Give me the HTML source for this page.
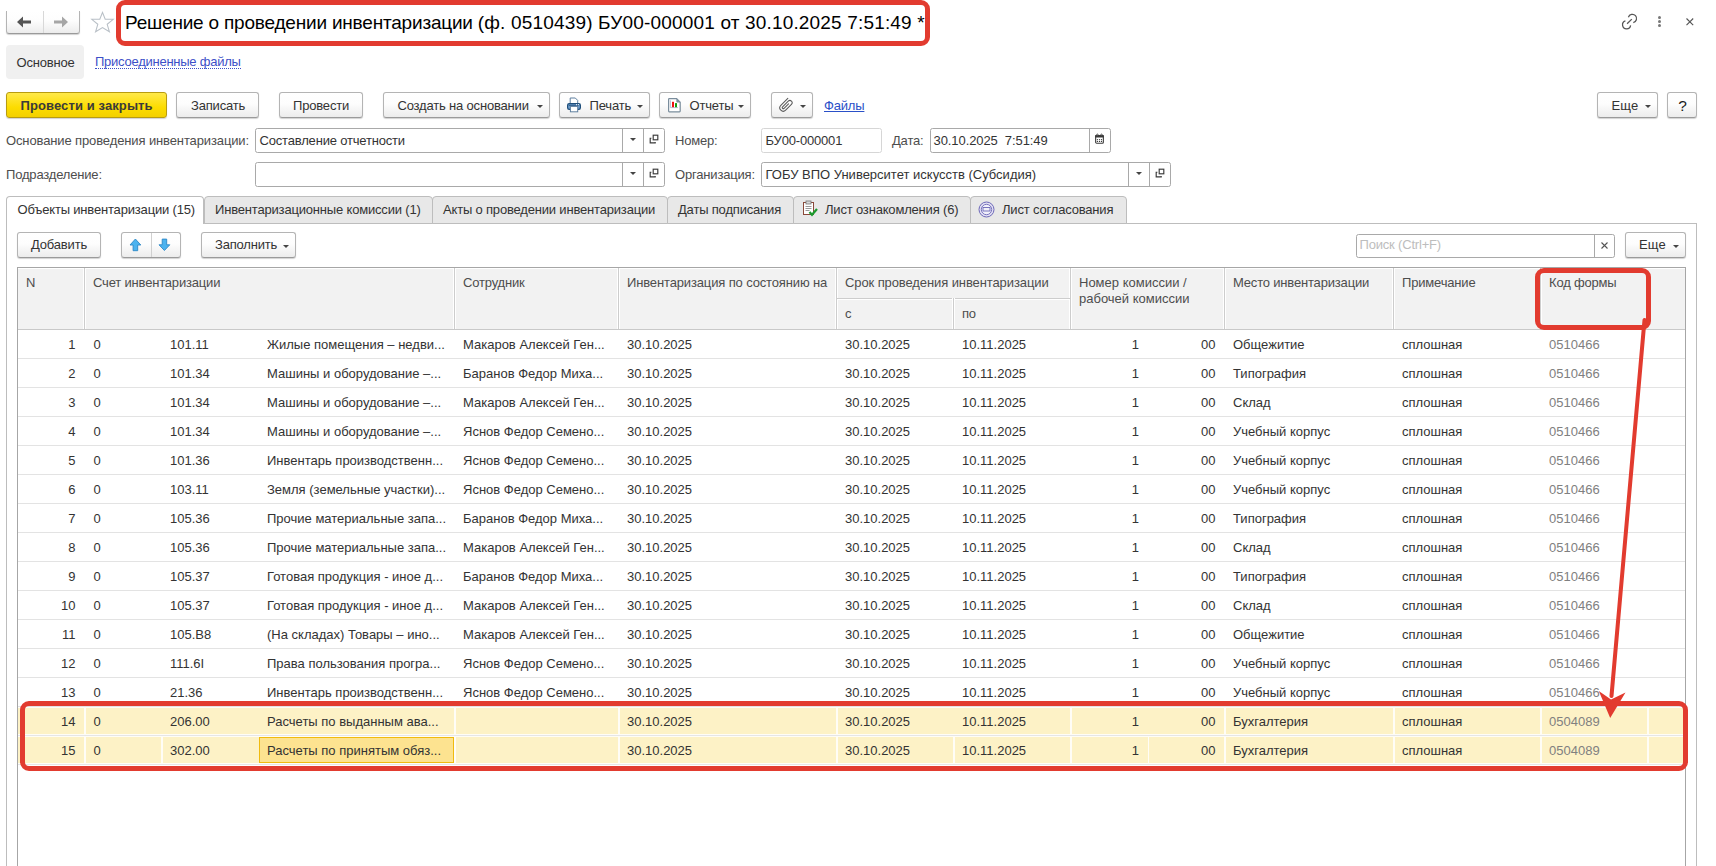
<!DOCTYPE html><html><head><meta charset="utf-8"><style>
html,body{margin:0;padding:0;width:1716px;height:866px;overflow:hidden;background:#fff;position:relative;font-family:"Liberation Sans",sans-serif;}
.t{position:absolute;white-space:nowrap;line-height:16px;height:16px;}
.btn{position:absolute;box-sizing:border-box;border:1px solid #b4b4b4;border-bottom-color:#9a9a9a;border-radius:3px;background:linear-gradient(#ffffff 0%,#fdfdfd 45%,#ececec 100%);box-shadow:0 1px 1px rgba(0,0,0,0.18);}
.inp{position:absolute;box-sizing:border-box;border:1px solid #a9a9a9;border-radius:2.5px;background:#fff;}
.vl{position:absolute;width:1px;}
.hl{position:absolute;height:1px;}
</style></head><body>
<div class="btn" style="left:6px;top:11px;width:74px;height:23px;border-top:none;border-radius:0 0 3px 3px;"></div>
<div style="position:absolute;left:43px;top:11px;width:1px;height:22px;background:#d8d8d8;"></div>
<svg style="position:absolute;left:17px;top:16px" width="16" height="12" viewBox="0 0 16 12"><path d="M0 6 L6 0.5 L6 4.5 L14 4.5 L14 7.5 L6 7.5 L6 11.5 Z" fill="#555"/></svg>
<svg style="position:absolute;left:53px;top:16px" width="16" height="12" viewBox="0 0 16 12"><path d="M15 6 L9 0.5 L9 4.5 L1 4.5 L1 7.5 L9 7.5 L9 11.5 Z" fill="#a6a6a6"/></svg>
<svg style="position:absolute;left:90px;top:10px" width="25" height="24" viewBox="0 0 25 24"><path d="M12.5 2.4 L15.2 9.1 L23.2 9.3 L17.2 14.3 L19.4 21.8 L12.5 17.6 L5.6 21.8 L7.8 14.3 L1.8 9.3 L9.8 9.1 Z" fill="none" stroke="#b9c0c7" stroke-width="1.1"/></svg>
<div class="t" style="left:125px;top:14.62px;font-size:19px;color:#000;font-weight:normal;letter-spacing:-0.2px;">Решение о проведении инвентаризации</div>
<div class="t" style="left:477.8px;top:14.62px;font-size:19px;color:#000;font-weight:normal;letter-spacing:0.17px;">(ф. 0510439) БУ00-000001 от 30.10.2025 7:51:49 *</div>
<div style="position:absolute;left:116px;top:0px;width:814px;height:46px;box-sizing:border-box;border:5px solid #e23b2f;border-radius:9px;"></div>
<svg style="position:absolute;left:1615px;top:8px" width="28" height="26" viewBox="0 0 28 26"><g fill="none" stroke="#555" stroke-width="1.25" stroke-linecap="butt"><path d="M13.4 9.2 A4.2 4.2 0 1 1 18.3 14.6"/><path d="M10.4 12.9 A4.05 4.05 0 1 0 15.6 17.3"/><path d="M12.1 15.8 L16.8 11.1"/></g></svg>
<div style="position:absolute;left:1657.5px;top:15.5px;width:3.2px;height:3.2px;background:#777;border-radius:50%;"></div>
<div style="position:absolute;left:1657.5px;top:19.5px;width:3.2px;height:3.2px;background:#777;border-radius:50%;"></div>
<div style="position:absolute;left:1657.5px;top:23.5px;width:3.2px;height:3.2px;background:#777;border-radius:50%;"></div>
<svg style="position:absolute;left:1685.5px;top:17.5px" width="8" height="8" viewBox="0 0 8 8"><path d="M0.5 0.5 L7.2 7.2 M7.2 0.5 L0.5 7.2" stroke="#555" stroke-width="1.1"/></svg>
<div style="position:absolute;left:6px;top:45px;width:78px;height:34px;background:#f0f0f0;border-radius:4px;"></div>
<div class="t" style="left:16.5px;top:54.5px;font-size:13px;color:#333;font-weight:normal;letter-spacing:-0.18px;">Основное</div>
<div class="t" style="left:95px;top:54.0px;font-size:13px;color:#3d4fc8;font-weight:normal;letter-spacing:-0.25px;border-bottom:1px dotted #3d4fc8;height:13.5px;">Присоединенные файлы</div>
<div class="btn" style="left:6px;top:92px;width:161px;height:26px;border-color:#b89c10;background:linear-gradient(#ffe94a,#fcdc00 60%,#f3d000);"></div>
<div class="t" style="left:20.5px;top:97.5px;font-size:13px;color:#3a3a3a;font-weight:bold;letter-spacing:0.1px;">Провести и закрыть</div>
<div class="btn" style="left:176px;top:92px;width:83px;height:26px;"></div>
<div class="t" style="left:191px;top:97.5px;font-size:13px;color:#333;font-weight:normal;letter-spacing:-0.18px;">Записать</div>
<div class="btn" style="left:279px;top:92px;width:84px;height:26px;"></div>
<div class="t" style="left:293px;top:97.5px;font-size:13px;color:#333;font-weight:normal;letter-spacing:-0.18px;">Провести</div>
<div class="btn" style="left:383px;top:92px;width:167px;height:26px;"></div>
<div class="t" style="left:397.5px;top:97.5px;font-size:13px;color:#333;font-weight:normal;letter-spacing:-0.18px;">Создать на основании</div>
<div style="position:absolute;left:537px;top:104.9px;width:0;height:0;border-left:3px solid transparent;border-right:3px solid transparent;border-top:3.2px solid #444;"></div>
<div class="btn" style="left:559px;top:92px;width:91px;height:26px;"></div>
<div class="t" style="left:589.5px;top:97.5px;font-size:13px;color:#333;font-weight:normal;letter-spacing:-0.18px;">Печать</div>
<div style="position:absolute;left:637px;top:104.9px;width:0;height:0;border-left:3px solid transparent;border-right:3px solid transparent;border-top:3.2px solid #444;"></div>
<svg style="position:absolute;left:566px;top:97px" width="16" height="16" viewBox="0 0 16 16">
<path d="M4.2 1 L9.3 1 L11.7 3.4 L11.7 6.8 L4.2 6.8 Z" fill="#fff" stroke="#5f7f9f" stroke-width="1"/>
<rect x="1.6" y="6.6" width="12.8" height="5.8" rx="1.6" fill="#6e9dcc" stroke="#1f4e7a" stroke-width="1.2"/>
<path d="M2.8 8.3 L13.2 8.3" stroke="#1f4e7a" stroke-width="0.9"/>
<rect x="10" y="7.2" width="1" height="1" fill="#fff"/><rect x="12" y="7.2" width="1" height="1" fill="#fff"/>
<rect x="4.4" y="9.4" width="7.3" height="5.4" fill="#fff" stroke="#5f7f9f" stroke-width="1"/></svg>
<div class="btn" style="left:659px;top:92px;width:92px;height:26px;"></div>
<div class="t" style="left:689.5px;top:97.5px;font-size:13px;color:#333;font-weight:normal;letter-spacing:-0.18px;">Отчеты</div>
<div style="position:absolute;left:738px;top:104.9px;width:0;height:0;border-left:3px solid transparent;border-right:3px solid transparent;border-top:3.2px solid #444;"></div>
<svg style="position:absolute;left:667px;top:97px" width="15" height="16" viewBox="0 0 15 16">
<path d="M2.2 1.7 H9.6 L13.2 5.3 V14.1 Q13.2 14.8 12.5 14.8 H2.2 Q1.6 14.8 1.6 14.1 V2.4 Q1.6 1.7 2.2 1.7 Z" fill="#fff" stroke="#7a8d9c" stroke-width="1.2"/>
<path d="M9.4 1.7 L13.2 5.5 L10.2 5.5 Q9.4 5.5 9.4 4.7 Z" fill="#7a8d9c"/>
<path d="M3.4 3.3 V10.6 H11" fill="none" stroke="#9aa8c0" stroke-width="0.7"/>
<rect x="5" y="4.8" width="2" height="5.4" fill="#ee1111"/><rect x="8" y="6.1" width="2" height="4.1" fill="#12a012"/></svg>
<div class="btn" style="left:771px;top:92px;width:42px;height:26px;"></div>
<div style="position:absolute;left:800px;top:104.9px;width:0;height:0;border-left:3px solid transparent;border-right:3px solid transparent;border-top:3.2px solid #444;"></div>
<svg style="position:absolute;left:778px;top:96px" width="18" height="18" viewBox="0 0 18 18"><g transform="matrix(0.7071 -0.7071 0.7071 0.7071 0 0)"><path d="M5.3 8.6 L-4.6 8.6 A3.4 3.4 0 0 0 -4.6 15.4 L3.6 15.4 A2.25 2.25 0 0 0 3.6 10.9 L-4.4 10.9 A1.05 1.05 0 0 0 -4.4 13.0 L1.9 13.0" fill="none" stroke="#5a5a5a" stroke-width="1.05" stroke-linecap="round"/></g></svg>
<div class="t" style="left:824px;top:97.5px;font-size:13px;color:#2a50c8;font-weight:normal;letter-spacing:-0.18px;text-decoration:underline;">Файлы</div>
<div class="btn" style="left:1597px;top:92px;width:61px;height:26px;"></div>
<div class="t" style="left:1611.5px;top:97.5px;font-size:13px;color:#333;font-weight:normal;letter-spacing:0.2px;">Еще</div>
<div style="position:absolute;left:1645px;top:104.9px;width:0;height:0;border-left:3px solid transparent;border-right:3px solid transparent;border-top:3.2px solid #444;"></div>
<div class="btn" style="left:1667px;top:92px;width:30px;height:26px;"></div>
<div class="t" style="left:1678.2px;top:97.83px;font-size:15.5px;color:#1a1a1a;font-weight:normal;">?</div>
<div class="t" style="left:6px;top:132.5px;font-size:13px;color:#4d4d4d;font-weight:normal;letter-spacing:-0.12px;">Основание проведения инвентаризации:</div>
<div class="inp" style="left:255px;top:128px;width:410px;height:25px;"></div>
<div style="position:absolute;left:622px;top:129px;width:1px;height:23px;background:#a9a9a9;"></div>
<div style="position:absolute;left:643px;top:129px;width:1px;height:23px;background:#a9a9a9;"></div>
<div style="position:absolute;left:630.0px;top:138.4px;width:0;height:0;border-left:3px solid transparent;border-right:3px solid transparent;border-top:3.2px solid #444;"></div>
<svg style="position:absolute;left:648.8px;top:133.8px" width="11" height="11" viewBox="0 0 11 11"><path d="M2.4 4.2 H1.2 V8.8 H6.2 V8" fill="none" stroke="#3a3a3a" stroke-width="1.15"/><rect x="4.2" y="1.2" width="4.6" height="4.6" fill="none" stroke="#3a3a3a" stroke-width="1.15"/></svg>
<div class="t" style="left:259.5px;top:132.5px;font-size:13px;color:#333;font-weight:normal;letter-spacing:-0.18px;">Составление отчетности</div>
<div class="t" style="left:675px;top:132.5px;font-size:13px;color:#4d4d4d;font-weight:normal;letter-spacing:-0.18px;">Номер:</div>
<div class="inp" style="left:761px;top:128px;width:121px;height:25px;border-color:#d6d6d6;"></div>
<div class="t" style="left:765.5px;top:132.5px;font-size:13px;color:#333;font-weight:normal;letter-spacing:-0.18px;">БУ00-000001</div>
<div class="t" style="left:892px;top:132.5px;font-size:13px;color:#4d4d4d;font-weight:normal;letter-spacing:-0.18px;">Дата:</div>
<div class="inp" style="left:930px;top:128px;width:181px;height:25px;"></div>
<div style="position:absolute;left:1089px;top:129px;width:1px;height:23px;background:#a9a9a9;"></div>
<div class="t" style="left:933.5px;top:132.5px;font-size:13px;color:#333;font-weight:normal;letter-spacing:-0.08px;">30.10.2025&nbsp; 7:51:49</div>
<svg style="position:absolute;left:1094px;top:133px" width="12" height="12" viewBox="0 0 12 12"><rect x="1.65" y="2.45" width="7.7" height="7.8" rx="1" fill="#fff" stroke="#3a3a3a" stroke-width="1.1"/><rect x="1.1" y="1.9" width="8.8" height="2.7" rx="0.8" fill="#3a3a3a"/><g fill="#fff" stroke="#3a3a3a" stroke-width="0.8"><circle cx="3.4" cy="1.8" r="0.75"/><circle cx="7.5" cy="1.8" r="0.75"/></g><g fill="#3a3a3a"><circle cx="3.4" cy="6.6" r="0.65"/><circle cx="5.5" cy="6.6" r="0.65"/><circle cx="7.5" cy="6.6" r="0.65"/><circle cx="3.4" cy="8.4" r="0.65"/><circle cx="5.5" cy="8.4" r="0.65"/><circle cx="7.5" cy="8.4" r="0.65"/></g></svg>
<div class="t" style="left:6px;top:166.5px;font-size:13px;color:#4d4d4d;font-weight:normal;letter-spacing:-0.18px;">Подразделение:</div>
<div class="inp" style="left:255px;top:162px;width:410px;height:25px;"></div>
<div style="position:absolute;left:622px;top:163px;width:1px;height:23px;background:#a9a9a9;"></div>
<div style="position:absolute;left:643px;top:163px;width:1px;height:23px;background:#a9a9a9;"></div>
<div style="position:absolute;left:630.0px;top:172.4px;width:0;height:0;border-left:3px solid transparent;border-right:3px solid transparent;border-top:3.2px solid #444;"></div>
<svg style="position:absolute;left:648.8px;top:167.8px" width="11" height="11" viewBox="0 0 11 11"><path d="M2.4 4.2 H1.2 V8.8 H6.2 V8" fill="none" stroke="#3a3a3a" stroke-width="1.15"/><rect x="4.2" y="1.2" width="4.6" height="4.6" fill="none" stroke="#3a3a3a" stroke-width="1.15"/></svg>
<div class="t" style="left:675px;top:166.5px;font-size:13px;color:#4d4d4d;font-weight:normal;letter-spacing:-0.18px;">Организация:</div>
<div class="inp" style="left:761px;top:162px;width:410px;height:25px;"></div>
<div style="position:absolute;left:1128px;top:163px;width:1px;height:23px;background:#a9a9a9;"></div>
<div style="position:absolute;left:1149px;top:163px;width:1px;height:23px;background:#a9a9a9;"></div>
<div style="position:absolute;left:1136.0px;top:172.4px;width:0;height:0;border-left:3px solid transparent;border-right:3px solid transparent;border-top:3.2px solid #444;"></div>
<svg style="position:absolute;left:1154.8px;top:167.8px" width="11" height="11" viewBox="0 0 11 11"><path d="M2.4 4.2 H1.2 V8.8 H6.2 V8" fill="none" stroke="#3a3a3a" stroke-width="1.15"/><rect x="4.2" y="1.2" width="4.6" height="4.6" fill="none" stroke="#3a3a3a" stroke-width="1.15"/></svg>
<div class="t" style="left:765.5px;top:166.5px;font-size:13px;color:#333;font-weight:normal;">ГОБУ ВПО Университет искусств (Субсидия)</div>
<div style="position:absolute;left:6px;top:223px;width:1691px;height:700px;box-sizing:border-box;border:1px solid #bdbdbd;border-bottom:none;"></div>
<div style="position:absolute;left:6.0px;top:196px;width:198.0px;height:28px;box-sizing:border-box;border:1px solid #bdbdbd;border-bottom:none;border-radius:4px 4px 0 0;background:#fff;"></div>
<div class="t" style="left:17.5px;top:201.5px;font-size:13px;color:#333;font-weight:normal;letter-spacing:-0.18px;">Объекты инвентаризации (15)</div>
<div style="position:absolute;left:203.5px;top:196px;width:229px;height:28px;box-sizing:border-box;border:1px solid #bdbdbd;border-radius:4px 4px 0 0;background:#e8e8e8;"></div>
<div class="t" style="left:215px;top:201.5px;font-size:13px;color:#333;font-weight:normal;letter-spacing:-0.18px;">Инвентаризационные комиссии (1)</div>
<div style="position:absolute;left:431.5px;top:196px;width:236px;height:28px;box-sizing:border-box;border:1px solid #bdbdbd;border-radius:4px 4px 0 0;background:#e8e8e8;"></div>
<div class="t" style="left:443px;top:201.5px;font-size:13px;color:#333;font-weight:normal;letter-spacing:-0.18px;">Акты о проведении инвентаризации</div>
<div style="position:absolute;left:666.5px;top:196px;width:127.5px;height:28px;box-sizing:border-box;border:1px solid #bdbdbd;border-radius:4px 4px 0 0;background:#e8e8e8;"></div>
<div class="t" style="left:678px;top:201.5px;font-size:13px;color:#333;font-weight:normal;letter-spacing:-0.18px;">Даты подписания</div>
<div style="position:absolute;left:793.0px;top:196px;width:178.0px;height:28px;box-sizing:border-box;border:1px solid #bdbdbd;border-radius:4px 4px 0 0;background:#e8e8e8;"></div>
<div class="t" style="left:825px;top:201.5px;font-size:13px;color:#333;font-weight:normal;letter-spacing:-0.18px;">Лист ознакомления (6)</div>
<div style="position:absolute;left:970.0px;top:196px;width:156.5px;height:28px;box-sizing:border-box;border:1px solid #bdbdbd;border-radius:4px 4px 0 0;background:#e8e8e8;"></div>
<div class="t" style="left:1002px;top:201.5px;font-size:13px;color:#333;font-weight:normal;letter-spacing:-0.18px;">Лист согласования</div>
<svg style="position:absolute;left:802px;top:200px" width="16" height="17" viewBox="0 0 16 17"><rect x="1.5" y="2.5" width="10" height="12" fill="#fff" stroke="#8a4a3a"/><rect x="4" y="1" width="5" height="3" fill="#d8d8d8" stroke="#777" stroke-width="0.8"/><g stroke="#999" stroke-width="1"><path d="M3.5 6.5h6M3.5 8.5h6M3.5 10.5h4"/></g><path d="M7.5 12 L10 14.8 L15 9" fill="none" stroke="#1c9a2e" stroke-width="2.2"/></svg>
<svg style="position:absolute;left:978px;top:201px" width="17" height="17" viewBox="0 0 17 17"><circle cx="8.5" cy="8.5" r="7.5" fill="#e2e0f3" stroke="#6d68b8" stroke-width="1"/><circle cx="8.5" cy="8.5" r="5.2" fill="#f1f0fa" stroke="#6d68b8" stroke-width="0.9"/><rect x="5" y="6.5" width="7" height="3.5" fill="none" stroke="#6d68b8" stroke-width="0.9"/></svg>
<div class="btn" style="left:17px;top:232px;width:84px;height:26px;"></div>
<div class="t" style="left:31px;top:237.2px;font-size:13px;color:#333;font-weight:normal;letter-spacing:-0.18px;">Добавить</div>
<div class="btn" style="left:121px;top:232px;width:60px;height:26px;"></div>
<div style="position:absolute;left:151px;top:233px;width:1px;height:24px;background:#d0d0d0;"></div>
<svg style="position:absolute;left:128px;top:237px" width="15" height="15" viewBox="0 0 15 15"><path d="M7.4 2 L12.8 8 L9.7 8 L9.7 13.7 L5.1 13.7 L5.1 8 L2 8 Z" fill="#4cb3ef" stroke="#2d88c6" stroke-width="0.9" stroke-linejoin="miter"/></svg>
<svg style="position:absolute;left:157px;top:237px" width="15" height="15" viewBox="0 0 15 15"><path d="M5.2 2.1 L9.7 2.1 L9.7 7.8 L12.8 7.8 L7.4 13.5 L2 7.8 L5.2 7.8 Z" fill="#4cb3ef" stroke="#2d88c6" stroke-width="0.9"/></svg>
<div class="btn" style="left:201px;top:232px;width:95px;height:26px;"></div>
<div class="t" style="left:215px;top:237.2px;font-size:13px;color:#333;font-weight:normal;letter-spacing:-0.18px;">Заполнить</div>
<div style="position:absolute;left:283px;top:244.9px;width:0;height:0;border-left:3px solid transparent;border-right:3px solid transparent;border-top:3.2px solid #444;"></div>
<div class="inp" style="left:1356px;top:233.5px;width:259px;height:24px;"></div>
<div style="position:absolute;left:1594px;top:234.5px;width:1px;height:22px;background:#a9a9a9;"></div>
<div class="t" style="left:1359.5px;top:237.2px;font-size:13px;color:#bdbdbd;font-weight:normal;letter-spacing:-0.18px;">Поиск (Ctrl+F)</div>
<svg style="position:absolute;left:1601px;top:242px" width="7" height="7" viewBox="0 0 7 7"><path d="M0.5 0.5 L6.5 6.5 M6.5 0.5 L0.5 6.5" stroke="#555" stroke-width="1.1"/></svg>
<div class="btn" style="left:1625px;top:232px;width:61px;height:26px;"></div>
<div class="t" style="left:1639px;top:237.2px;font-size:13px;color:#333;font-weight:normal;letter-spacing:0.2px;">Еще</div>
<div style="position:absolute;left:1673px;top:244.9px;width:0;height:0;border-left:3px solid transparent;border-right:3px solid transparent;border-top:3.2px solid #444;"></div>
<div style="position:absolute;left:17px;top:267px;width:1669px;height:620px;box-sizing:border-box;border:1px solid #a6a6a6;border-bottom:none;"></div>
<div style="position:absolute;left:18px;top:268px;width:1667px;height:61px;background:#f2f2f2;"></div>
<div style="position:absolute;left:18px;top:328.5px;width:1667px;height:1px;background:#c9c9c9;"></div>
<div style="position:absolute;left:18px;top:268px;width:1667px;height:1px;background:#fff;"></div>
<div style="position:absolute;left:83px;top:268px;width:1px;height:61px;background:#fff;"></div>
<div style="position:absolute;left:84px;top:268px;width:1px;height:61px;background:#cdcdcd;"></div>
<div style="position:absolute;left:85px;top:268px;width:1px;height:61px;background:#fff;"></div>
<div style="position:absolute;left:453px;top:268px;width:1px;height:61px;background:#fff;"></div>
<div style="position:absolute;left:454px;top:268px;width:1px;height:61px;background:#cdcdcd;"></div>
<div style="position:absolute;left:455px;top:268px;width:1px;height:61px;background:#fff;"></div>
<div style="position:absolute;left:617px;top:268px;width:1px;height:61px;background:#fff;"></div>
<div style="position:absolute;left:618px;top:268px;width:1px;height:61px;background:#cdcdcd;"></div>
<div style="position:absolute;left:619px;top:268px;width:1px;height:61px;background:#fff;"></div>
<div style="position:absolute;left:835px;top:268px;width:1px;height:61px;background:#fff;"></div>
<div style="position:absolute;left:836px;top:268px;width:1px;height:61px;background:#cdcdcd;"></div>
<div style="position:absolute;left:837px;top:268px;width:1px;height:61px;background:#fff;"></div>
<div style="position:absolute;left:1069px;top:268px;width:1px;height:61px;background:#fff;"></div>
<div style="position:absolute;left:1070px;top:268px;width:1px;height:61px;background:#cdcdcd;"></div>
<div style="position:absolute;left:1071px;top:268px;width:1px;height:61px;background:#fff;"></div>
<div style="position:absolute;left:1223px;top:268px;width:1px;height:61px;background:#fff;"></div>
<div style="position:absolute;left:1224px;top:268px;width:1px;height:61px;background:#cdcdcd;"></div>
<div style="position:absolute;left:1225px;top:268px;width:1px;height:61px;background:#fff;"></div>
<div style="position:absolute;left:1392px;top:268px;width:1px;height:61px;background:#fff;"></div>
<div style="position:absolute;left:1393px;top:268px;width:1px;height:61px;background:#cdcdcd;"></div>
<div style="position:absolute;left:1394px;top:268px;width:1px;height:61px;background:#fff;"></div>
<div style="position:absolute;left:1539px;top:268px;width:1px;height:61px;background:#fff;"></div>
<div style="position:absolute;left:1540px;top:268px;width:1px;height:61px;background:#cdcdcd;"></div>
<div style="position:absolute;left:1541px;top:268px;width:1px;height:61px;background:#fff;"></div>
<div style="position:absolute;left:837px;top:297.5px;width:233px;height:1px;background:#cdcdcd;"></div>
<div style="position:absolute;left:837px;top:298.5px;width:233px;height:1px;background:#fff;"></div>
<div style="position:absolute;left:953px;top:298px;width:1px;height:31px;background:#cdcdcd;"></div>
<div style="position:absolute;left:952px;top:298px;width:1px;height:31px;background:#fff;"></div>
<div style="position:absolute;left:954px;top:298px;width:1px;height:31px;background:#fff;"></div>
<div class="t" style="left:26px;top:274.5px;font-size:13px;color:#4d4d4d;font-weight:normal;letter-spacing:-0.18px;">N</div>
<div class="t" style="left:93px;top:274.5px;font-size:13px;color:#4d4d4d;font-weight:normal;letter-spacing:-0.18px;">Счет инвентаризации</div>
<div class="t" style="left:463px;top:274.5px;font-size:13px;color:#4d4d4d;font-weight:normal;letter-spacing:-0.18px;">Сотрудник</div>
<div class="t" style="left:627px;top:274.5px;font-size:13px;color:#4d4d4d;font-weight:normal;letter-spacing:-0.14px;">Инвентаризация по состоянию на</div>
<div class="t" style="left:845px;top:274.5px;font-size:13px;color:#4d4d4d;font-weight:normal;letter-spacing:-0.1px;">Срок проведения инвентаризации</div>
<div class="t" style="left:845px;top:305.5px;font-size:13px;color:#4d4d4d;font-weight:normal;letter-spacing:-0.18px;">с</div>
<div class="t" style="left:962px;top:305.5px;font-size:13px;color:#4d4d4d;font-weight:normal;letter-spacing:-0.18px;">по</div>
<div class="t" style="left:1079px;top:274.5px;font-size:13px;color:#4d4d4d;font-weight:normal;letter-spacing:0px;">Номер комиссии /</div>
<div class="t" style="left:1079px;top:290.5px;font-size:13px;color:#4d4d4d;font-weight:normal;letter-spacing:0px;">рабочей комиссии</div>
<div class="t" style="left:1233px;top:274.5px;font-size:13px;color:#4d4d4d;font-weight:normal;letter-spacing:-0.18px;">Место инвентаризации</div>
<div class="t" style="left:1402px;top:274.5px;font-size:13px;color:#4d4d4d;font-weight:normal;letter-spacing:-0.18px;">Примечание</div>
<div class="t" style="left:1549px;top:274.5px;font-size:13px;color:#4d4d4d;font-weight:normal;letter-spacing:-0.18px;">Код формы</div>
<div style="position:absolute;left:18px;top:358px;width:1667px;height:1px;background:#e3e3e3;"></div>
<div class="t" style="right:1640.5px;top:336.5px;font-size:13px;color:#333;">1</div>
<div class="t" style="left:93.5px;top:336.5px;font-size:13px;color:#333;font-weight:normal;">0</div>
<div class="t" style="left:170px;top:336.5px;font-size:13px;color:#333;font-weight:normal;">101.11</div>
<div class="t" style="left:267px;top:336.5px;font-size:13px;color:#333;font-weight:normal;">Жилые помещения – недви...</div>
<div class="t" style="left:463px;top:336.5px;font-size:13px;color:#333;font-weight:normal;">Макаров Алексей Ген...</div>
<div class="t" style="left:627px;top:336.5px;font-size:13px;color:#333;font-weight:normal;">30.10.2025</div>
<div class="t" style="left:845px;top:336.5px;font-size:13px;color:#333;font-weight:normal;">30.10.2025</div>
<div class="t" style="left:962px;top:336.5px;font-size:13px;color:#333;font-weight:normal;">10.11.2025</div>
<div class="t" style="right:577px;top:336.5px;font-size:13px;color:#333;">1</div>
<div class="t" style="right:500.5px;top:336.5px;font-size:13px;color:#333;">00</div>
<div class="t" style="left:1233px;top:336.5px;font-size:13px;color:#333;font-weight:normal;">Общежитие</div>
<div class="t" style="left:1402px;top:336.5px;font-size:13px;color:#333;font-weight:normal;">сплошная</div>
<div class="t" style="left:1549px;top:336.5px;font-size:13px;color:#808080;font-weight:normal;">0510466</div>
<div style="position:absolute;left:18px;top:387px;width:1667px;height:1px;background:#e3e3e3;"></div>
<div class="t" style="right:1640.5px;top:365.5px;font-size:13px;color:#333;">2</div>
<div class="t" style="left:93.5px;top:365.5px;font-size:13px;color:#333;font-weight:normal;">0</div>
<div class="t" style="left:170px;top:365.5px;font-size:13px;color:#333;font-weight:normal;">101.34</div>
<div class="t" style="left:267px;top:365.5px;font-size:13px;color:#333;font-weight:normal;">Машины и оборудование –...</div>
<div class="t" style="left:463px;top:365.5px;font-size:13px;color:#333;font-weight:normal;">Баранов Федор Миха...</div>
<div class="t" style="left:627px;top:365.5px;font-size:13px;color:#333;font-weight:normal;">30.10.2025</div>
<div class="t" style="left:845px;top:365.5px;font-size:13px;color:#333;font-weight:normal;">30.10.2025</div>
<div class="t" style="left:962px;top:365.5px;font-size:13px;color:#333;font-weight:normal;">10.11.2025</div>
<div class="t" style="right:577px;top:365.5px;font-size:13px;color:#333;">1</div>
<div class="t" style="right:500.5px;top:365.5px;font-size:13px;color:#333;">00</div>
<div class="t" style="left:1233px;top:365.5px;font-size:13px;color:#333;font-weight:normal;">Типография</div>
<div class="t" style="left:1402px;top:365.5px;font-size:13px;color:#333;font-weight:normal;">сплошная</div>
<div class="t" style="left:1549px;top:365.5px;font-size:13px;color:#808080;font-weight:normal;">0510466</div>
<div style="position:absolute;left:18px;top:416px;width:1667px;height:1px;background:#e3e3e3;"></div>
<div class="t" style="right:1640.5px;top:394.5px;font-size:13px;color:#333;">3</div>
<div class="t" style="left:93.5px;top:394.5px;font-size:13px;color:#333;font-weight:normal;">0</div>
<div class="t" style="left:170px;top:394.5px;font-size:13px;color:#333;font-weight:normal;">101.34</div>
<div class="t" style="left:267px;top:394.5px;font-size:13px;color:#333;font-weight:normal;">Машины и оборудование –...</div>
<div class="t" style="left:463px;top:394.5px;font-size:13px;color:#333;font-weight:normal;">Макаров Алексей Ген...</div>
<div class="t" style="left:627px;top:394.5px;font-size:13px;color:#333;font-weight:normal;">30.10.2025</div>
<div class="t" style="left:845px;top:394.5px;font-size:13px;color:#333;font-weight:normal;">30.10.2025</div>
<div class="t" style="left:962px;top:394.5px;font-size:13px;color:#333;font-weight:normal;">10.11.2025</div>
<div class="t" style="right:577px;top:394.5px;font-size:13px;color:#333;">1</div>
<div class="t" style="right:500.5px;top:394.5px;font-size:13px;color:#333;">00</div>
<div class="t" style="left:1233px;top:394.5px;font-size:13px;color:#333;font-weight:normal;">Склад</div>
<div class="t" style="left:1402px;top:394.5px;font-size:13px;color:#333;font-weight:normal;">сплошная</div>
<div class="t" style="left:1549px;top:394.5px;font-size:13px;color:#808080;font-weight:normal;">0510466</div>
<div style="position:absolute;left:18px;top:445px;width:1667px;height:1px;background:#e3e3e3;"></div>
<div class="t" style="right:1640.5px;top:423.5px;font-size:13px;color:#333;">4</div>
<div class="t" style="left:93.5px;top:423.5px;font-size:13px;color:#333;font-weight:normal;">0</div>
<div class="t" style="left:170px;top:423.5px;font-size:13px;color:#333;font-weight:normal;">101.34</div>
<div class="t" style="left:267px;top:423.5px;font-size:13px;color:#333;font-weight:normal;">Машины и оборудование –...</div>
<div class="t" style="left:463px;top:423.5px;font-size:13px;color:#333;font-weight:normal;">Яснов Федор Семено...</div>
<div class="t" style="left:627px;top:423.5px;font-size:13px;color:#333;font-weight:normal;">30.10.2025</div>
<div class="t" style="left:845px;top:423.5px;font-size:13px;color:#333;font-weight:normal;">30.10.2025</div>
<div class="t" style="left:962px;top:423.5px;font-size:13px;color:#333;font-weight:normal;">10.11.2025</div>
<div class="t" style="right:577px;top:423.5px;font-size:13px;color:#333;">1</div>
<div class="t" style="right:500.5px;top:423.5px;font-size:13px;color:#333;">00</div>
<div class="t" style="left:1233px;top:423.5px;font-size:13px;color:#333;font-weight:normal;">Учебный корпус</div>
<div class="t" style="left:1402px;top:423.5px;font-size:13px;color:#333;font-weight:normal;">сплошная</div>
<div class="t" style="left:1549px;top:423.5px;font-size:13px;color:#808080;font-weight:normal;">0510466</div>
<div style="position:absolute;left:18px;top:474px;width:1667px;height:1px;background:#e3e3e3;"></div>
<div class="t" style="right:1640.5px;top:452.5px;font-size:13px;color:#333;">5</div>
<div class="t" style="left:93.5px;top:452.5px;font-size:13px;color:#333;font-weight:normal;">0</div>
<div class="t" style="left:170px;top:452.5px;font-size:13px;color:#333;font-weight:normal;">101.36</div>
<div class="t" style="left:267px;top:452.5px;font-size:13px;color:#333;font-weight:normal;">Инвентарь производственн...</div>
<div class="t" style="left:463px;top:452.5px;font-size:13px;color:#333;font-weight:normal;">Яснов Федор Семено...</div>
<div class="t" style="left:627px;top:452.5px;font-size:13px;color:#333;font-weight:normal;">30.10.2025</div>
<div class="t" style="left:845px;top:452.5px;font-size:13px;color:#333;font-weight:normal;">30.10.2025</div>
<div class="t" style="left:962px;top:452.5px;font-size:13px;color:#333;font-weight:normal;">10.11.2025</div>
<div class="t" style="right:577px;top:452.5px;font-size:13px;color:#333;">1</div>
<div class="t" style="right:500.5px;top:452.5px;font-size:13px;color:#333;">00</div>
<div class="t" style="left:1233px;top:452.5px;font-size:13px;color:#333;font-weight:normal;">Учебный корпус</div>
<div class="t" style="left:1402px;top:452.5px;font-size:13px;color:#333;font-weight:normal;">сплошная</div>
<div class="t" style="left:1549px;top:452.5px;font-size:13px;color:#808080;font-weight:normal;">0510466</div>
<div style="position:absolute;left:18px;top:503px;width:1667px;height:1px;background:#e3e3e3;"></div>
<div class="t" style="right:1640.5px;top:481.5px;font-size:13px;color:#333;">6</div>
<div class="t" style="left:93.5px;top:481.5px;font-size:13px;color:#333;font-weight:normal;">0</div>
<div class="t" style="left:170px;top:481.5px;font-size:13px;color:#333;font-weight:normal;">103.11</div>
<div class="t" style="left:267px;top:481.5px;font-size:13px;color:#333;font-weight:normal;">Земля (земельные участки)...</div>
<div class="t" style="left:463px;top:481.5px;font-size:13px;color:#333;font-weight:normal;">Яснов Федор Семено...</div>
<div class="t" style="left:627px;top:481.5px;font-size:13px;color:#333;font-weight:normal;">30.10.2025</div>
<div class="t" style="left:845px;top:481.5px;font-size:13px;color:#333;font-weight:normal;">30.10.2025</div>
<div class="t" style="left:962px;top:481.5px;font-size:13px;color:#333;font-weight:normal;">10.11.2025</div>
<div class="t" style="right:577px;top:481.5px;font-size:13px;color:#333;">1</div>
<div class="t" style="right:500.5px;top:481.5px;font-size:13px;color:#333;">00</div>
<div class="t" style="left:1233px;top:481.5px;font-size:13px;color:#333;font-weight:normal;">Учебный корпус</div>
<div class="t" style="left:1402px;top:481.5px;font-size:13px;color:#333;font-weight:normal;">сплошная</div>
<div class="t" style="left:1549px;top:481.5px;font-size:13px;color:#808080;font-weight:normal;">0510466</div>
<div style="position:absolute;left:18px;top:532px;width:1667px;height:1px;background:#e3e3e3;"></div>
<div class="t" style="right:1640.5px;top:510.5px;font-size:13px;color:#333;">7</div>
<div class="t" style="left:93.5px;top:510.5px;font-size:13px;color:#333;font-weight:normal;">0</div>
<div class="t" style="left:170px;top:510.5px;font-size:13px;color:#333;font-weight:normal;">105.36</div>
<div class="t" style="left:267px;top:510.5px;font-size:13px;color:#333;font-weight:normal;">Прочие материальные запа...</div>
<div class="t" style="left:463px;top:510.5px;font-size:13px;color:#333;font-weight:normal;">Баранов Федор Миха...</div>
<div class="t" style="left:627px;top:510.5px;font-size:13px;color:#333;font-weight:normal;">30.10.2025</div>
<div class="t" style="left:845px;top:510.5px;font-size:13px;color:#333;font-weight:normal;">30.10.2025</div>
<div class="t" style="left:962px;top:510.5px;font-size:13px;color:#333;font-weight:normal;">10.11.2025</div>
<div class="t" style="right:577px;top:510.5px;font-size:13px;color:#333;">1</div>
<div class="t" style="right:500.5px;top:510.5px;font-size:13px;color:#333;">00</div>
<div class="t" style="left:1233px;top:510.5px;font-size:13px;color:#333;font-weight:normal;">Типография</div>
<div class="t" style="left:1402px;top:510.5px;font-size:13px;color:#333;font-weight:normal;">сплошная</div>
<div class="t" style="left:1549px;top:510.5px;font-size:13px;color:#808080;font-weight:normal;">0510466</div>
<div style="position:absolute;left:18px;top:561px;width:1667px;height:1px;background:#e3e3e3;"></div>
<div class="t" style="right:1640.5px;top:539.5px;font-size:13px;color:#333;">8</div>
<div class="t" style="left:93.5px;top:539.5px;font-size:13px;color:#333;font-weight:normal;">0</div>
<div class="t" style="left:170px;top:539.5px;font-size:13px;color:#333;font-weight:normal;">105.36</div>
<div class="t" style="left:267px;top:539.5px;font-size:13px;color:#333;font-weight:normal;">Прочие материальные запа...</div>
<div class="t" style="left:463px;top:539.5px;font-size:13px;color:#333;font-weight:normal;">Макаров Алексей Ген...</div>
<div class="t" style="left:627px;top:539.5px;font-size:13px;color:#333;font-weight:normal;">30.10.2025</div>
<div class="t" style="left:845px;top:539.5px;font-size:13px;color:#333;font-weight:normal;">30.10.2025</div>
<div class="t" style="left:962px;top:539.5px;font-size:13px;color:#333;font-weight:normal;">10.11.2025</div>
<div class="t" style="right:577px;top:539.5px;font-size:13px;color:#333;">1</div>
<div class="t" style="right:500.5px;top:539.5px;font-size:13px;color:#333;">00</div>
<div class="t" style="left:1233px;top:539.5px;font-size:13px;color:#333;font-weight:normal;">Склад</div>
<div class="t" style="left:1402px;top:539.5px;font-size:13px;color:#333;font-weight:normal;">сплошная</div>
<div class="t" style="left:1549px;top:539.5px;font-size:13px;color:#808080;font-weight:normal;">0510466</div>
<div style="position:absolute;left:18px;top:590px;width:1667px;height:1px;background:#e3e3e3;"></div>
<div class="t" style="right:1640.5px;top:568.5px;font-size:13px;color:#333;">9</div>
<div class="t" style="left:93.5px;top:568.5px;font-size:13px;color:#333;font-weight:normal;">0</div>
<div class="t" style="left:170px;top:568.5px;font-size:13px;color:#333;font-weight:normal;">105.37</div>
<div class="t" style="left:267px;top:568.5px;font-size:13px;color:#333;font-weight:normal;">Готовая продукция - иное д...</div>
<div class="t" style="left:463px;top:568.5px;font-size:13px;color:#333;font-weight:normal;">Баранов Федор Миха...</div>
<div class="t" style="left:627px;top:568.5px;font-size:13px;color:#333;font-weight:normal;">30.10.2025</div>
<div class="t" style="left:845px;top:568.5px;font-size:13px;color:#333;font-weight:normal;">30.10.2025</div>
<div class="t" style="left:962px;top:568.5px;font-size:13px;color:#333;font-weight:normal;">10.11.2025</div>
<div class="t" style="right:577px;top:568.5px;font-size:13px;color:#333;">1</div>
<div class="t" style="right:500.5px;top:568.5px;font-size:13px;color:#333;">00</div>
<div class="t" style="left:1233px;top:568.5px;font-size:13px;color:#333;font-weight:normal;">Типография</div>
<div class="t" style="left:1402px;top:568.5px;font-size:13px;color:#333;font-weight:normal;">сплошная</div>
<div class="t" style="left:1549px;top:568.5px;font-size:13px;color:#808080;font-weight:normal;">0510466</div>
<div style="position:absolute;left:18px;top:619px;width:1667px;height:1px;background:#e3e3e3;"></div>
<div class="t" style="right:1640.5px;top:597.5px;font-size:13px;color:#333;">10</div>
<div class="t" style="left:93.5px;top:597.5px;font-size:13px;color:#333;font-weight:normal;">0</div>
<div class="t" style="left:170px;top:597.5px;font-size:13px;color:#333;font-weight:normal;">105.37</div>
<div class="t" style="left:267px;top:597.5px;font-size:13px;color:#333;font-weight:normal;">Готовая продукция - иное д...</div>
<div class="t" style="left:463px;top:597.5px;font-size:13px;color:#333;font-weight:normal;">Макаров Алексей Ген...</div>
<div class="t" style="left:627px;top:597.5px;font-size:13px;color:#333;font-weight:normal;">30.10.2025</div>
<div class="t" style="left:845px;top:597.5px;font-size:13px;color:#333;font-weight:normal;">30.10.2025</div>
<div class="t" style="left:962px;top:597.5px;font-size:13px;color:#333;font-weight:normal;">10.11.2025</div>
<div class="t" style="right:577px;top:597.5px;font-size:13px;color:#333;">1</div>
<div class="t" style="right:500.5px;top:597.5px;font-size:13px;color:#333;">00</div>
<div class="t" style="left:1233px;top:597.5px;font-size:13px;color:#333;font-weight:normal;">Склад</div>
<div class="t" style="left:1402px;top:597.5px;font-size:13px;color:#333;font-weight:normal;">сплошная</div>
<div class="t" style="left:1549px;top:597.5px;font-size:13px;color:#808080;font-weight:normal;">0510466</div>
<div style="position:absolute;left:18px;top:648px;width:1667px;height:1px;background:#e3e3e3;"></div>
<div class="t" style="right:1640.5px;top:626.5px;font-size:13px;color:#333;">11</div>
<div class="t" style="left:93.5px;top:626.5px;font-size:13px;color:#333;font-weight:normal;">0</div>
<div class="t" style="left:170px;top:626.5px;font-size:13px;color:#333;font-weight:normal;">105.В8</div>
<div class="t" style="left:267px;top:626.5px;font-size:13px;color:#333;font-weight:normal;">(На складах) Товары – ино...</div>
<div class="t" style="left:463px;top:626.5px;font-size:13px;color:#333;font-weight:normal;">Макаров Алексей Ген...</div>
<div class="t" style="left:627px;top:626.5px;font-size:13px;color:#333;font-weight:normal;">30.10.2025</div>
<div class="t" style="left:845px;top:626.5px;font-size:13px;color:#333;font-weight:normal;">30.10.2025</div>
<div class="t" style="left:962px;top:626.5px;font-size:13px;color:#333;font-weight:normal;">10.11.2025</div>
<div class="t" style="right:577px;top:626.5px;font-size:13px;color:#333;">1</div>
<div class="t" style="right:500.5px;top:626.5px;font-size:13px;color:#333;">00</div>
<div class="t" style="left:1233px;top:626.5px;font-size:13px;color:#333;font-weight:normal;">Общежитие</div>
<div class="t" style="left:1402px;top:626.5px;font-size:13px;color:#333;font-weight:normal;">сплошная</div>
<div class="t" style="left:1549px;top:626.5px;font-size:13px;color:#808080;font-weight:normal;">0510466</div>
<div style="position:absolute;left:18px;top:677px;width:1667px;height:1px;background:#e3e3e3;"></div>
<div class="t" style="right:1640.5px;top:655.5px;font-size:13px;color:#333;">12</div>
<div class="t" style="left:93.5px;top:655.5px;font-size:13px;color:#333;font-weight:normal;">0</div>
<div class="t" style="left:170px;top:655.5px;font-size:13px;color:#333;font-weight:normal;">111.6I</div>
<div class="t" style="left:267px;top:655.5px;font-size:13px;color:#333;font-weight:normal;">Права пользования програ...</div>
<div class="t" style="left:463px;top:655.5px;font-size:13px;color:#333;font-weight:normal;">Яснов Федор Семено...</div>
<div class="t" style="left:627px;top:655.5px;font-size:13px;color:#333;font-weight:normal;">30.10.2025</div>
<div class="t" style="left:845px;top:655.5px;font-size:13px;color:#333;font-weight:normal;">30.10.2025</div>
<div class="t" style="left:962px;top:655.5px;font-size:13px;color:#333;font-weight:normal;">10.11.2025</div>
<div class="t" style="right:577px;top:655.5px;font-size:13px;color:#333;">1</div>
<div class="t" style="right:500.5px;top:655.5px;font-size:13px;color:#333;">00</div>
<div class="t" style="left:1233px;top:655.5px;font-size:13px;color:#333;font-weight:normal;">Учебный корпус</div>
<div class="t" style="left:1402px;top:655.5px;font-size:13px;color:#333;font-weight:normal;">сплошная</div>
<div class="t" style="left:1549px;top:655.5px;font-size:13px;color:#808080;font-weight:normal;">0510466</div>
<div style="position:absolute;left:18px;top:706px;width:1667px;height:1px;background:#e3e3e3;"></div>
<div class="t" style="right:1640.5px;top:684.5px;font-size:13px;color:#333;">13</div>
<div class="t" style="left:93.5px;top:684.5px;font-size:13px;color:#333;font-weight:normal;">0</div>
<div class="t" style="left:170px;top:684.5px;font-size:13px;color:#333;font-weight:normal;">21.36</div>
<div class="t" style="left:267px;top:684.5px;font-size:13px;color:#333;font-weight:normal;">Инвентарь производственн...</div>
<div class="t" style="left:463px;top:684.5px;font-size:13px;color:#333;font-weight:normal;">Яснов Федор Семено...</div>
<div class="t" style="left:627px;top:684.5px;font-size:13px;color:#333;font-weight:normal;">30.10.2025</div>
<div class="t" style="left:845px;top:684.5px;font-size:13px;color:#333;font-weight:normal;">30.10.2025</div>
<div class="t" style="left:962px;top:684.5px;font-size:13px;color:#333;font-weight:normal;">10.11.2025</div>
<div class="t" style="right:577px;top:684.5px;font-size:13px;color:#333;">1</div>
<div class="t" style="right:500.5px;top:684.5px;font-size:13px;color:#333;">00</div>
<div class="t" style="left:1233px;top:684.5px;font-size:13px;color:#333;font-weight:normal;">Учебный корпус</div>
<div class="t" style="left:1402px;top:684.5px;font-size:13px;color:#333;font-weight:normal;">сплошная</div>
<div class="t" style="left:1549px;top:684.5px;font-size:13px;color:#808080;font-weight:normal;">0510466</div>
<div style="position:absolute;left:18px;top:707px;width:1667px;height:28px;background:#fffdf6;"></div>
<div style="position:absolute;left:18px;top:708px;width:1667px;height:26px;background:#fdf2c6;"></div>
<div style="position:absolute;left:84px;top:707px;width:1.5px;height:28px;background:#fffdf6;"></div>
<div style="position:absolute;left:454px;top:707px;width:1.5px;height:28px;background:#fffdf6;"></div>
<div style="position:absolute;left:618px;top:707px;width:1.5px;height:28px;background:#fffdf6;"></div>
<div style="position:absolute;left:836px;top:707px;width:1.5px;height:28px;background:#fffdf6;"></div>
<div style="position:absolute;left:1070px;top:707px;width:1.5px;height:28px;background:#fffdf6;"></div>
<div style="position:absolute;left:1224px;top:707px;width:1.5px;height:28px;background:#fffdf6;"></div>
<div style="position:absolute;left:1393px;top:707px;width:1.5px;height:28px;background:#fffdf6;"></div>
<div style="position:absolute;left:1540px;top:707px;width:1.5px;height:28px;background:#fffdf6;"></div>
<div style="position:absolute;left:1647px;top:707px;width:1.5px;height:28px;background:#fffdf6;"></div>
<div style="position:absolute;left:18px;top:735px;width:1667px;height:1px;background:#e6e6e6;"></div>
<div class="t" style="right:1640.5px;top:713.5px;font-size:13px;color:#333;">14</div>
<div class="t" style="left:93.5px;top:713.5px;font-size:13px;color:#333;font-weight:normal;">0</div>
<div class="t" style="left:170px;top:713.5px;font-size:13px;color:#333;font-weight:normal;">206.00</div>
<div class="t" style="left:267px;top:713.5px;font-size:13px;color:#333;font-weight:normal;">Расчеты по выданным ава...</div>
<div class="t" style="left:627px;top:713.5px;font-size:13px;color:#333;font-weight:normal;">30.10.2025</div>
<div class="t" style="left:845px;top:713.5px;font-size:13px;color:#333;font-weight:normal;">30.10.2025</div>
<div class="t" style="left:962px;top:713.5px;font-size:13px;color:#333;font-weight:normal;">10.11.2025</div>
<div class="t" style="right:577px;top:713.5px;font-size:13px;color:#333;">1</div>
<div class="t" style="right:500.5px;top:713.5px;font-size:13px;color:#333;">00</div>
<div class="t" style="left:1233px;top:713.5px;font-size:13px;color:#333;font-weight:normal;">Бухгалтерия</div>
<div class="t" style="left:1402px;top:713.5px;font-size:13px;color:#333;font-weight:normal;">сплошная</div>
<div class="t" style="left:1549px;top:713.5px;font-size:13px;color:#808080;font-weight:normal;">0504089</div>
<div style="position:absolute;left:18px;top:736px;width:1667px;height:28px;background:#fffdf6;"></div>
<div style="position:absolute;left:18px;top:737px;width:1667px;height:26px;background:#fdf2c6;"></div>
<div style="position:absolute;left:84px;top:736px;width:1.5px;height:28px;background:#fffdf6;"></div>
<div style="position:absolute;left:454px;top:736px;width:1.5px;height:28px;background:#fffdf6;"></div>
<div style="position:absolute;left:618px;top:736px;width:1.5px;height:28px;background:#fffdf6;"></div>
<div style="position:absolute;left:836px;top:736px;width:1.5px;height:28px;background:#fffdf6;"></div>
<div style="position:absolute;left:1070px;top:736px;width:1.5px;height:28px;background:#fffdf6;"></div>
<div style="position:absolute;left:1224px;top:736px;width:1.5px;height:28px;background:#fffdf6;"></div>
<div style="position:absolute;left:1393px;top:736px;width:1.5px;height:28px;background:#fffdf6;"></div>
<div style="position:absolute;left:1540px;top:736px;width:1.5px;height:28px;background:#fffdf6;"></div>
<div style="position:absolute;left:1647px;top:736px;width:1.5px;height:28px;background:#fffdf6;"></div>
<div style="position:absolute;left:161px;top:736px;width:1.5px;height:28px;background:#fffdf6;"></div>
<div style="position:absolute;left:953px;top:736px;width:1.5px;height:28px;background:#fffdf6;"></div>
<div style="position:absolute;left:1147.5px;top:736px;width:1.5px;height:28px;background:#fffdf6;"></div>
<div style="position:absolute;left:18px;top:764px;width:1667px;height:1px;background:#e6e6e6;"></div>
<div style="position:absolute;left:259px;top:737px;width:195px;height:26px;box-sizing:border-box;border:1px solid #f0bb10;background:#fde390;"></div>
<div class="t" style="right:1640.5px;top:742.5px;font-size:13px;color:#333;">15</div>
<div class="t" style="left:93.5px;top:742.5px;font-size:13px;color:#333;font-weight:normal;">0</div>
<div class="t" style="left:170px;top:742.5px;font-size:13px;color:#333;font-weight:normal;">302.00</div>
<div class="t" style="left:267px;top:742.5px;font-size:13px;color:#333;font-weight:normal;">Расчеты по принятым обяз...</div>
<div class="t" style="left:627px;top:742.5px;font-size:13px;color:#333;font-weight:normal;">30.10.2025</div>
<div class="t" style="left:845px;top:742.5px;font-size:13px;color:#333;font-weight:normal;">30.10.2025</div>
<div class="t" style="left:962px;top:742.5px;font-size:13px;color:#333;font-weight:normal;">10.11.2025</div>
<div class="t" style="right:577px;top:742.5px;font-size:13px;color:#333;">1</div>
<div class="t" style="right:500.5px;top:742.5px;font-size:13px;color:#333;">00</div>
<div class="t" style="left:1233px;top:742.5px;font-size:13px;color:#333;font-weight:normal;">Бухгалтерия</div>
<div class="t" style="left:1402px;top:742.5px;font-size:13px;color:#333;font-weight:normal;">сплошная</div>
<div class="t" style="left:1549px;top:742.5px;font-size:13px;color:#808080;font-weight:normal;">0504089</div>
<div style="position:absolute;left:1534.5px;top:267.5px;width:116.5px;height:62.5px;box-sizing:border-box;border:5px solid #e23b2f;border-radius:9px;"></div>
<div style="position:absolute;left:20px;top:701px;width:1668px;height:70px;box-sizing:border-box;border:5px solid #e23b2f;border-radius:9px;"></div>
<svg style="position:absolute;left:0;top:0" width="1716" height="866" viewBox="0 0 1716 866"><path d="M1644.5 320 L1611.5 696" stroke="#e23b2f" stroke-width="4" stroke-linecap="round" fill="none"/><path d="M1610.2 718 L1598.8 691 L1611 699.5 L1625.5 692.5 Z" fill="#e23b2f"/></svg>
<!--TABLE-->
</body></html>
